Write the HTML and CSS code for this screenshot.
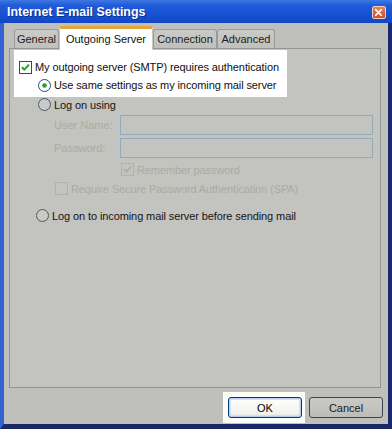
FILE: index.html
```html
<!DOCTYPE html>
<html lang="en">
<head>
    <meta charset="UTF-8">
    <meta name="viewport" content="width=device-width, initial-scale=1.0">
    <title>Internet E-mail Settings</title>
    <link rel="stylesheet" href="styles.css">
</head>
<body>
    <div class="window">
        <div class="titlebar">
            <span class="title">Internet E-mail Settings</span>
            <span class="close">
                <svg width="14" height="13" viewBox="0 0 14 13">
                    <path d="M4 3.5 L10 9.5 M10 3.5 L4 9.5" stroke="#fff" stroke-width="1.8" stroke-linecap="round"/>
                </svg>
            </span>
        </div>
        <div class="frame">
            <div class="tabs">
                <div class="tab t-general">General</div>
                <div class="tab active">Outgoing Server</div>
                <div class="tab t-conn">Connection</div>
                <div class="tab t-adv">Advanced</div>
            </div>
            <div class="panel">
                <div class="highlight">
                    <div class="row r-auth">
                        <svg class="box" width="13" height="13" viewBox="0 0 13 13">
                            <rect x="0.5" y="0.5" width="12" height="12" fill="#fff" stroke="#1c5180"/>
                            <path d="M3 6.2 L5.3 8.6 L10 3.6" fill="none" stroke="#21a121" stroke-width="2"/>
                        </svg>
                        <span>My outgoing server (SMTP) requires authentication</span>
                    </div>
                    <div class="row r-same">
                        <svg class="box" width="13" height="13" viewBox="0 0 13 13">
                            <circle cx="6.5" cy="6.5" r="6" fill="#fff" stroke="#1c5180"/>
                            <circle cx="6.5" cy="6.5" r="2.3" fill="#21a121"/>
                        </svg>
                        <span>Use same settings as my incoming mail server</span>
                    </div>
                </div>
                <div class="row r-logon">
                    <svg class="box" width="13" height="13" viewBox="0 0 13 13">
                        <circle cx="6.5" cy="6.5" r="6" fill="#c9c9c6" stroke="#485a70"/>
                    </svg>
                    <span>Log on using</span>
                </div>
                <div class="field f-user">
                    <span class="field-label">User Name:</span>
                    <div class="input"></div>
                </div>
                <div class="field f-pass">
                    <span class="field-label">Password:</span>
                    <div class="input"></div>
                </div>
                <div class="row disabled r-remember">
                    <svg class="box" width="13" height="13" viewBox="0 0 13 13">
                        <rect x="0.5" y="0.5" width="12" height="12" fill="#c3c3bf" stroke="#b2b2aa"/>
                        <path d="M3 6.2 L5.3 8.6 L10 3.6" fill="none" stroke="#aeaea6" stroke-width="2"/>
                    </svg>
                    <span>Remember password</span>
                </div>
                <div class="row disabled r-spa">
                    <svg class="box" width="13" height="13" viewBox="0 0 13 13">
                        <rect x="0.5" y="0.5" width="12" height="12" fill="#c3c3bf" stroke="#b2b2aa"/>
                    </svg>
                    <span>Require Secure Password Authentication (SPA)</span>
                </div>
                <div class="row r-before">
                    <svg class="box" width="13" height="13" viewBox="0 0 13 13">
                        <circle cx="6.5" cy="6.5" r="6" fill="#c9c9c6" stroke="#485a70"/>
                    </svg>
                    <span>Log on to incoming mail server before sending mail</span>
                </div>
            </div>
            <div class="footer">
                <div class="btn-focus">
                    <button class="btn default">OK</button>
                </div>
                <button class="btn">Cancel</button>
            </div>
        </div>
    </div>
</body>
</html>
```

FILE: styles.css
```css
body {
    margin: 0;
    padding: 0;
    font-family: "Liberation Sans", Arial, sans-serif;
    font-size: 11px;
    color: #151515;
    background-color: #bfbfbb;
}
.window {
    width: 392px;
    height: 429px;
    display: flex;
    flex-direction: column;
}
.titlebar {
    height: 23px;
    display: flex;
    align-items: center;
    justify-content: space-between;
    padding: 0 6px 0 7px;
    background: linear-gradient(#3d78e2 0%, #1f5ad8 25%, #1550d0 70%, #1247c4 100%);
}
.title {
    color: #fff;
    font-weight: bold;
    font-size: 12.4px;
    text-shadow: 1px 1px 0 #0b2f8a;
    padding-top: 1px;
}
.close {
    width: 14px;
    height: 13px;
    display: flex;
    border-radius: 2px;
    border: 1px solid #f0d0c0;
    box-sizing: border-box;
    background: linear-gradient(#e6835e, #c8502e);
    margin-top: 1px;
}
.close svg {
    margin: -1px 0 0 -1px;
}
.frame {
    flex: 1;
    display: flex;
    flex-direction: column;
    border-left: 4px solid #3362d2;
    border-right: 4px solid #1a2870;
    border-bottom: 5px solid #1b2766;
    padding-top: 3px;
    background-color: #bfbfbb;
}
.tabs {
    display: flex;
    align-items: flex-end;
    height: 22px;
    margin-left: 10px;
}
.tab {
    height: 19px;
    box-sizing: border-box;
    border: 1px solid #959c9c;
    border-bottom: none;
    border-radius: 3px 3px 0 0;
    background: linear-gradient(#cacac6, #c0c0bc);
    display: flex;
    align-items: center;
    justify-content: center;
    color: #1c1c1c;
}
.t-general {
    width: 45px;
}
.t-conn {
    width: 64px;
}
.t-adv {
    width: 58px;
}
.tab.active {
    width: 94px;
    height: 24px;
    margin-bottom: -2px;
    position: relative;
    z-index: 1;
    background: #fff;
    border-top: 3px solid #e8a23c;
    border-color: #e8a23c #c9c9c5 transparent #c9c9c5;
    color: #101010;
    padding-bottom: 2px;
}
.panel {
    margin-left: 5px;
    width: 372px;
    height: 340px;
    box-sizing: border-box;
    border: 1px solid #8e9595;
    background-color: #c3c3bf;
}
.highlight {
    margin: 1px 0 0 4px;
    width: 273px;
    height: 47px;
    box-sizing: border-box;
    padding: 8px 0 0 5px;
    background-color: #fff;
}
.row {
    display: flex;
    align-items: center;
    gap: 3px;
    height: 13px;
    white-space: nowrap;
    letter-spacing: -0.1px;
}
.row .box {
    flex-shrink: 0;
}
.r-auth {
    height: 18px;
    color: #101010;
}
.r-same {
    height: 18px;
    margin-left: 19px;
    color: #101010;
}
.r-logon {
    margin: 1px 0 0 28px;
}
.field {
    display: flex;
    align-items: center;
    height: 20px;
    margin-left: 44px;
}
.f-user {
    margin-top: 4px;
}
.f-pass {
    margin-top: 3px;
}
.field-label {
    width: 66px;
    color: #abab9f;
}
.input {
    width: 253px;
    height: 20px;
    box-sizing: border-box;
    border: 1px solid #94aabb;
    background-color: #c3c3bf;
}
.disabled {
    color: #abab9f;
}
.r-remember {
    margin: 5px 0 0 111px;
}
.r-spa {
    margin: 6px 0 0 45px;
}
.r-before {
    margin: 14px 0 0 26px;
}
.footer {
    display: flex;
    justify-content: flex-end;
    align-items: flex-start;
    gap: 4px;
    padding: 4px 5px 0 0;
}
.btn-focus {
    background-color: #fbfbf8;
    padding: 5px 3px 5px 5px;
}
.btn {
    width: 74px;
    height: 21px;
    box-sizing: border-box;
    font-family: "Liberation Sans", Arial, sans-serif;
    font-size: 11px;
    color: #1a1a1a;
    border: 1px solid #3a4550;
    border-radius: 3px;
    background: linear-gradient(#c9c9c6, #bdbdb8);
    padding: 0;
    margin-top: 5px;
}
.btn.default {
    margin-top: 0;
    color: #000;
    border-color: #003c74;
    background: linear-gradient(#ffffff, #f2f2ee 80%, #e0e0da);
    box-shadow: inset 0 0 0 1px #b8d0f0, inset 0 0 0 2px #cfe0f8;
}
```
